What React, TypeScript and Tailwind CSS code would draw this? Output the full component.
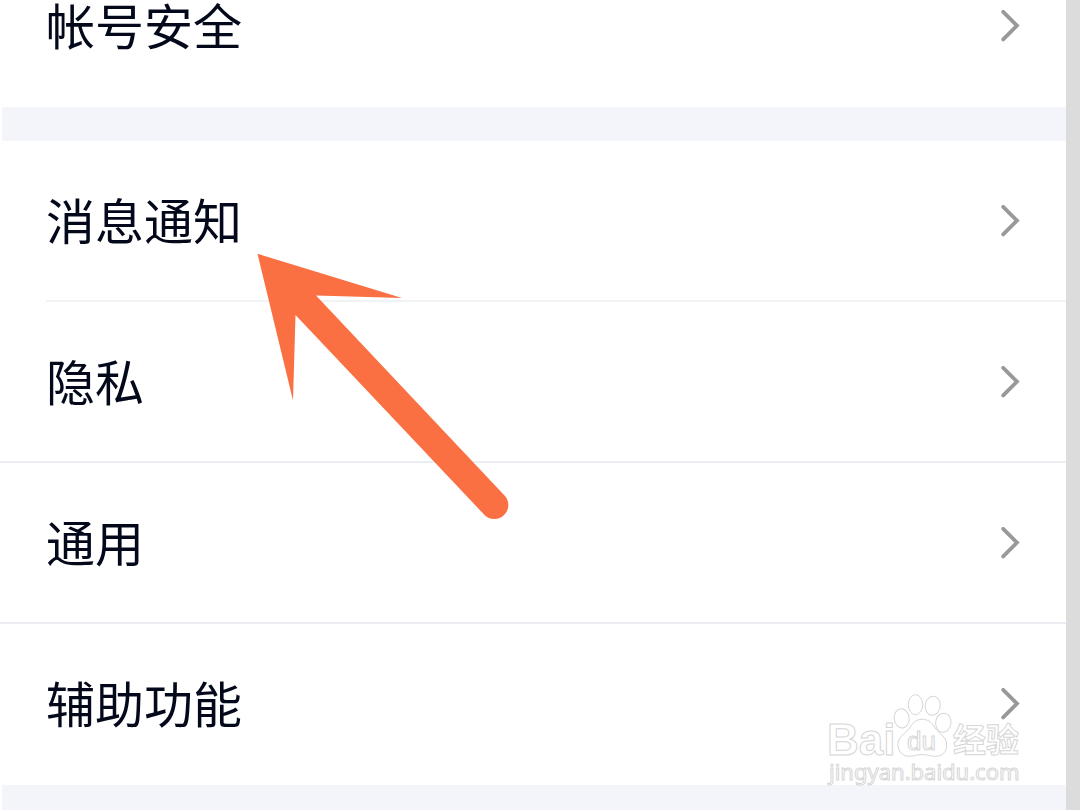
interface SettingRow {
  label: string;
  divider: string;
}

const accountRows: SettingRow[] = [{ label: "帐号安全", divider: "border-transparent" }];

const generalRows: SettingRow[] = [
  { label: "消息通知", divider: "border-[#f0f3f5] ml-[46px]" },
  { label: "隐私", divider: "border-[#ebeef2]" },
  { label: "通用", divider: "border-[#ebedf3]" },
  { label: "辅助功能", divider: "border-transparent" },
];

function Chevron() {
  return (
    <svg className="w-5 h-8 shrink-0" viewBox="0 0 20 32" fill="none" stroke="#999999" strokeWidth="3.8" strokeLinejoin="miter" strokeLinecap="round" aria-hidden="true">
      <path d="M3.2 1.8 L17 15.6 L3.2 29.4" />
    </svg>
  );
}

function Row({ label, divider }: SettingRow) {
  return (
    <li>
      <a href="#" className="block text-[#03081a]">
        <span className="flex items-center justify-between h-[159px] pl-[46px] pr-[46px]">
          <span className="pb-1 text-[49px] leading-[56px]">{label}</span>
          <Chevron />
        </span>
        <span className={`block border-b-2 ${divider}`} />
      </a>
    </li>
  );
}

function Arrow() {
  return (
    <svg className="absolute left-[257px] top-[253px] w-[254px] h-[268px] pointer-events-none" viewBox="0 0 254 268" fill="#fa7042" aria-hidden="true">
      <path d="M0.5 0.8 L145 45 L59 42.5 L248 243 A14 14 0 0 1 228 262.5 L38.5 62 L36 147.5 Z" />
    </svg>
  );
}

function Watermark() {
  return (
    <svg className="absolute right-[54px] bottom-5 w-[200px] h-[100px] pointer-events-none" viewBox="0 0 200 100" fill="#ffffff" stroke="#d6d6d6" strokeWidth="1">
      <ellipse cx="75.7" cy="28.3" rx="7.5" ry="9.7" transform="rotate(-8 75.7 28.3)" />
      <ellipse cx="89.5" cy="14.7" rx="7.2" ry="10" />
      <ellipse cx="106.7" cy="15.7" rx="7.5" ry="9.6" transform="rotate(8 106.7 15.7)" />
      <ellipse cx="117.3" cy="32.7" rx="7.7" ry="9.6" transform="rotate(8 117.3 32.7)" />
      <path d="M96.3 29.3 C103 29.3 106 33 109 38 C112 43 120.7 46 120.7 55 C120.7 63 115 66.5 109 66.3 C104 66.2 101 64.5 96 64.5 C91 64.5 88 66.3 83 66.3 C76 66.3 72 61 72 54.5 C72 46 80 43.5 83.5 38 C86.5 33 90 29.3 96.3 29.3 Z" />
      <text x="1" y="65" className="font-['Liberation_Sans',sans-serif] text-[44px] font-bold">Bai</text>
      <text x="81" y="60" className="font-['Liberation_Sans',sans-serif] text-[26px]">du</text>
      <text x="127" y="62" className="font-['Noto_Sans_CJK_SC',sans-serif] text-[33px] font-bold">经验</text>
      <text x="3" y="90" className="font-['Noto_Sans',sans-serif] text-[22px]">jingyan.baidu.com</text>
    </svg>
  );
}

export default function App() {
  return (
    <div className="relative flex min-h-screen overflow-hidden bg-white font-['Noto_Sans_CJK_SC',sans-serif]">
      <main className="flex-1 flex flex-col">
        <ul className="-mt-[54px]">
          {accountRows.map(row => <Row key={row.label} {...row} />)}
        </ul>
        <div className="h-[34px] ml-0.5 bg-[#f4f5fa]" />
        <ul>
          {generalRows.map(row => <Row key={row.label} {...row} />)}
        </ul>
        <div className="flex-1 ml-0.5 bg-[#f4f5fa]" />
      </main>
      <div className="w-3.5 bg-[#dcdcdc]" />
      <Arrow />
      <Watermark />
    </div>
  );
}
